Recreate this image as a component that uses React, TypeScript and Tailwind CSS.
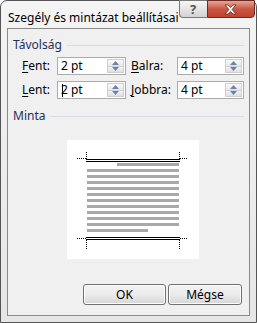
import React from "react";

const font = { fontFamily: '"Segoe UI", "Noto Sans", "Liberation Sans", sans-serif' };

const Spin: React.FC = () => (
  <div className="flex flex-col w-[17px] h-full">
    <div className="flex-1 border border-[#d0d0d0] bg-gradient-to-b from-[#fbfbfb] to-[#e6e6e6] flex items-center justify-center">
      <svg width="7" height="4" viewBox="0 0 7 4">
        <path d="M0 4 L3.5 0 L7 4 Z" fill="#6a82b0" />
      </svg>
    </div>
    <div className="flex-1 border border-t-0 border-[#d0d0d0] bg-gradient-to-b from-[#f3f3f3] to-[#e0e0e0] flex items-center justify-center">
      <svg width="7" height="4" viewBox="0 0 7 4">
        <path d="M0 0 L3.5 4 L7 0 Z" fill="#6a82b0" />
      </svg>
    </div>
  </div>
);

const SpinInput: React.FC<{ value: string; width: string; caret?: boolean }> = ({
  value,
  width,
  caret,
}) => (
  <div className={`${width} h-[18px] border border-[#ababab] bg-white flex items-stretch`}>
    <div className="flex-1 flex items-center pl-[3px] text-[12px] text-black relative">
      {caret && <span className="absolute left-[4px] top-[2px] w-[1px] h-[13px] bg-black" />}
      {value}
    </div>
    <div className="py-[1px] pr-[1px]">
      <Spin />
    </div>
  </div>
);

const Label: React.FC<{ k: string; rest: string; width: string }> = ({ k, rest, width }) => (
  <div className={`${width} text-[12px] text-black`}>
    <span className="underline underline-offset-2">{k}</span>
    {rest}
  </div>
);

const GroupTitle: React.FC<{ title: string }> = ({ title }) => (
  <div className="flex items-center gap-[5px] h-[16px]">
    <span className="text-[12px] text-[#1e2f5a]">{title}</span>
    <div className="flex-1 h-[1px] bg-[#d5dfe5] mr-[5px]" />
  </div>
);

const Preview: React.FC = () => {
  const full = [29, 35, 41, 47, 53, 59, 65, 71, 77, 83];
  return (
    <div className="w-[132px] h-[119px] bg-white ml-[59px] mt-[16px]">
      <svg width="132" height="119" viewBox="0 0 132 119" shapeRendering="crispEdges">
        <g stroke="#000" strokeWidth="1" strokeDasharray="1 1">
          <line x1="10" y1="18.5" x2="19" y2="18.5" />
          <line x1="19.5" y1="12" x2="19.5" y2="19" />
          <line x1="112.5" y1="12" x2="112.5" y2="19" />
          <line x1="113" y1="18.5" x2="121" y2="18.5" />
          <line x1="10" y1="98.5" x2="19" y2="98.5" />
          <line x1="19.5" y1="100" x2="19.5" y2="109" />
          <line x1="112.5" y1="100" x2="112.5" y2="109" />
          <line x1="113" y1="98.5" x2="121" y2="98.5" />
        </g>
        <g stroke="#000" strokeWidth="1">
          <line x1="19" y1="19.5" x2="113" y2="19.5" />
          <line x1="19" y1="21.5" x2="113" y2="21.5" />
          <line x1="19" y1="97.5" x2="113" y2="97.5" />
          <line x1="19" y1="99.5" x2="113" y2="99.5" />
        </g>
        <g fill="#a9a9a9">
          <rect x="50" y="23" width="62" height="3" />
          {full.map((y) => (
            <rect key={y} x="20" y={y} width="92" height="3" />
          ))}
          <rect x="20" y="89" width="61" height="3" />
        </g>
      </svg>
    </div>
  );
};

const Button: React.FC<{ children: React.ReactNode; width: string }> = ({ children, width }) => (
  <div
    className={`${width} h-[21px] rounded-[3px] border border-[#707070] bg-gradient-to-b from-[#f2f2f2] via-[#ebebeb] to-[#d6d6d6] flex items-center justify-center text-[12px] text-black shadow-[inset_0_0_0_1px_#fcfcfc]`}
  >
    {children}
  </div>
);

export default function App() {
  return (
    <div
      className="w-[257px] h-[323px] border border-[#555] rounded-t-[7px] bg-gradient-to-b from-[#f4f4f4] to-[#e6e6e6] flex flex-col px-[6px] pb-[6px]"
      style={font}
    >
      <div className="h-[27px] flex items-start">
        <div className="text-[12px] text-black pt-[8px] pl-[1px] whitespace-nowrap">
          Szegély és mintázat beállításai
        </div>
        <div className="ml-auto mr-[1px] flex h-[18px] -mt-[1px]">
          <div className="w-[28px] h-full border border-[#7a7a7a] border-r-0 rounded-bl-[4px] bg-gradient-to-b from-[#f7f7f7] to-[#d2d2d2] flex items-center justify-center">
            <span className="text-[13px] font-bold text-[#555] leading-none">?</span>
          </div>
          <div className="w-[48px] h-full border border-[#6a2a22] rounded-br-[4px] bg-gradient-to-b from-[#e8a598] via-[#c75643] to-[#c2412e] flex items-center justify-center">
            <svg width="13" height="11" viewBox="0 0 13 11">
              <path
                d="M1 1 L4 1 L6.5 3.5 L9 1 L12 1 L8 5.5 L12 10 L9 10 L6.5 7.5 L4 10 L1 10 L5 5.5 Z"
                fill="#fff"
                stroke="#5a2a22"
                strokeWidth="0.8"
              />
            </svg>
          </div>
        </div>
      </div>
      <div className="flex-1 border border-[#8a8a8a] bg-[#f0f0f0] flex flex-col pl-[5px] pt-[8px]">
        <GroupTitle title="Távolság" />
        <div className="flex flex-col gap-[6px] mt-[4px] pl-[9px]">
          <div className="flex items-center">
            <Label k="F" rest="ent:" width="w-[35px]" />
            <SpinInput value="2 pt" width="w-[69px]" />
            <div className="w-[5px]" />
            <Label k="B" rest="alra:" width="w-[46px]" />
            <SpinInput value="4 pt" width="w-[67px]" />
          </div>
          <div className="flex items-center">
            <Label k="L" rest="ent:" width="w-[35px]" />
            <SpinInput value="2 pt" width="w-[69px]" caret />
            <div className="w-[5px]" />
            <Label k="J" rest="obbra:" width="w-[46px]" />
            <SpinInput value="4 pt" width="w-[67px]" />
          </div>
        </div>
        <div className="mt-[9px]">
          <GroupTitle title="Minta" />
        </div>
        <div className="-ml-[5px]">
          <Preview />
        </div>
        <div className="flex justify-end gap-[2px] mt-[25px] pr-[7px]">
          <Button width="w-[83px]">OK</Button>
          <Button width="w-[74px]">Mégse</Button>
        </div>
      </div>
    </div>
  );
}
